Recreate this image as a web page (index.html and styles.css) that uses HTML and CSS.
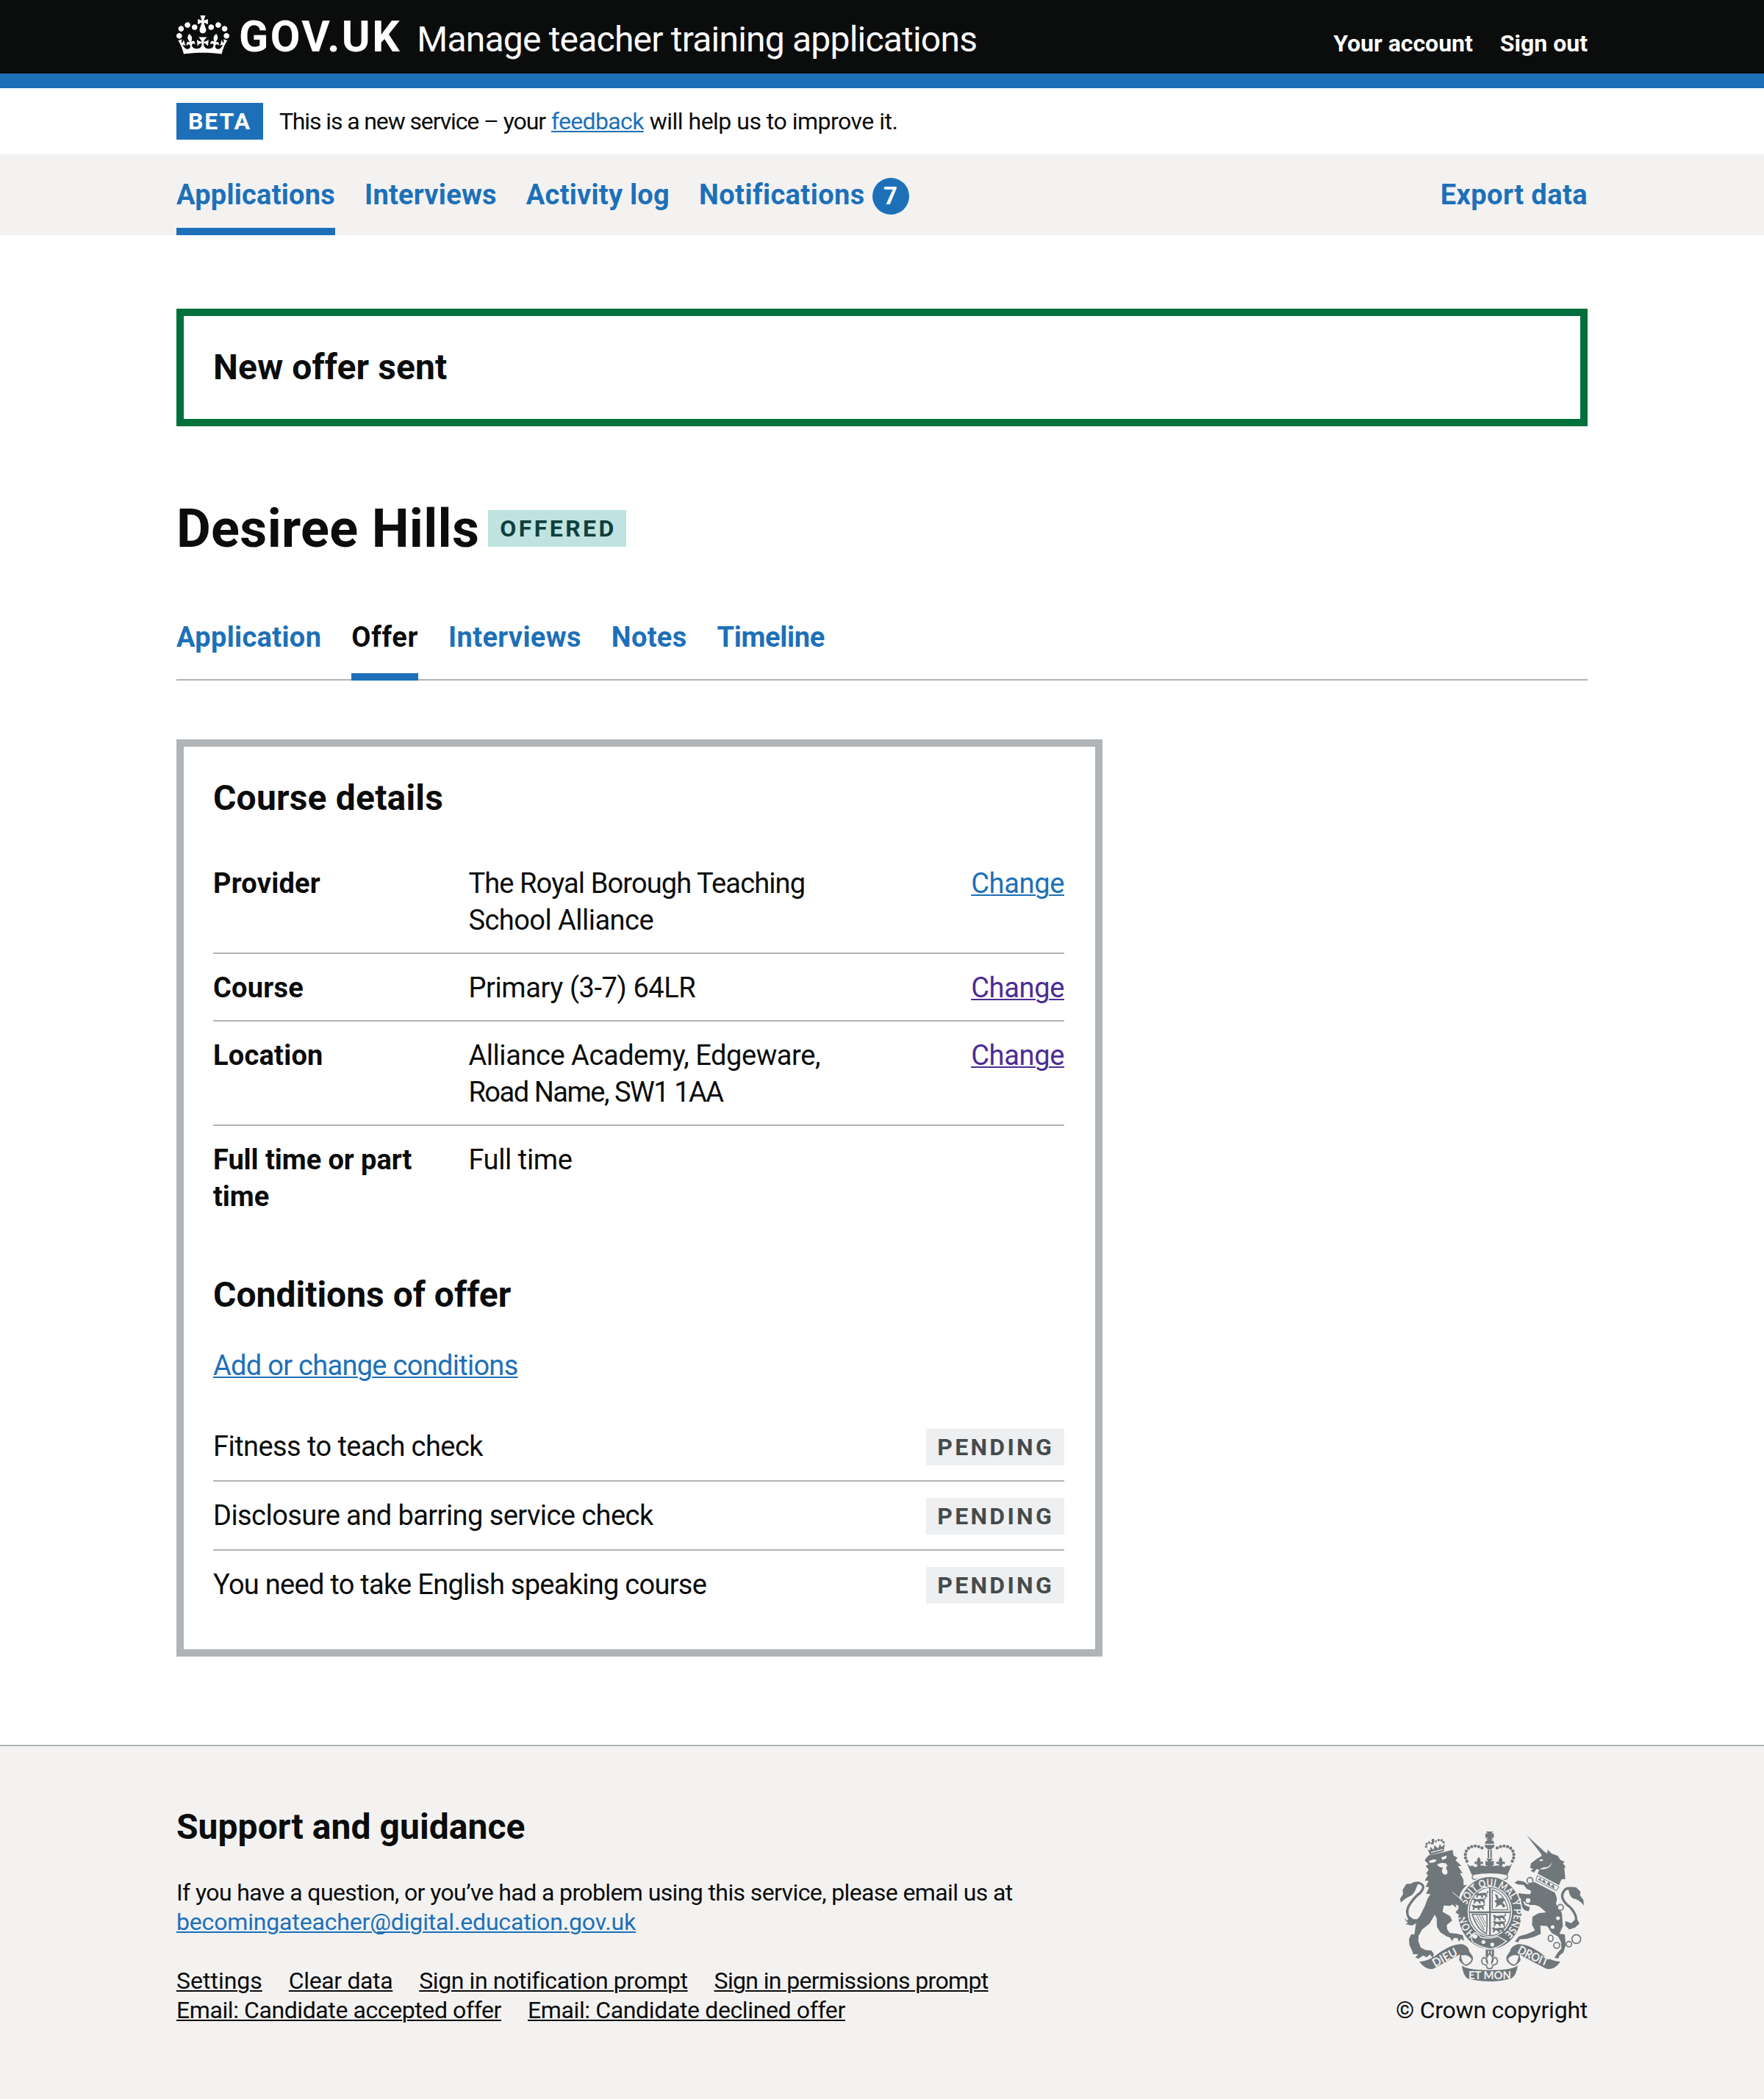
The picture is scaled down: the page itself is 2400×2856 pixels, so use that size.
FILE: index.html
```html
<!DOCTYPE html>
<html lang="en">
<head>
<meta charset="utf-8">
<title>Desiree Hills – Manage teacher training applications – GOV.UK</title>
<link rel="stylesheet" href="styles.css">
</head>
<body>
<header class="header">
  <div class="container header__inner">
    <a class="header__logo" href="#">
      <svg class="header__crown" viewBox="0 0 132 97" width="72" height="53" aria-hidden="true"><path fill="currentColor" fill-rule="evenodd" d="M25 30.2c3.5 1.5 7.7-.2 9.1-3.7 1.5-3.6-.2-7.8-3.9-9.2-3.6-1.4-7.6.3-9.1 3.9-1.4 3.5.3 7.5 3.9 9zM9 39.5c3.6 1.5 7.8-.2 9.2-3.7 1.5-3.6-.2-7.8-3.9-9.1-3.6-1.5-7.6.2-9.1 3.8-1.4 3.5.3 7.5 3.8 9zM4.4 57.2c3.5 1.5 7.7-.2 9.1-3.8 1.5-3.6-.2-7.7-3.9-9.1-3.5-1.5-7.6.3-9.1 3.8-1.4 3.5.3 7.6 3.9 9.1zm38.3-21.4c3.5 1.5 7.7-.2 9.1-3.8 1.5-3.6-.2-7.7-3.9-9.1-3.6-1.5-7.6.3-9.1 3.8-1.3 3.6.4 7.7 3.9 9.1zm64.4-5.6c-3.6 1.5-7.8-.2-9.1-3.7-1.5-3.6.2-7.8 3.8-9.2 3.6-1.4 7.7.3 9.2 3.9 1.3 3.5-.4 7.5-3.9 9zm15.9 9.3c-3.6 1.5-7.7-.2-9.1-3.7-1.5-3.6.2-7.8 3.7-9.1 3.6-1.5 7.7.2 9.2 3.8 1.5 3.5-.3 7.5-3.8 9zm4.7 17.7c-3.6 1.5-7.8-.2-9.2-3.8-1.5-3.6.2-7.7 3.9-9.1 3.6-1.5 7.7.3 9.2 3.8 1.3 3.5-.4 7.6-3.9 9.1zM89.3 35.8c-3.6 1.5-7.8-.2-9.2-3.8-1.4-3.6.2-7.7 3.9-9.1 3.6-1.5 7.7.3 9.2 3.8 1.4 3.6-.3 7.7-3.9 9.1zM69.7 17.7l8.9 4.7V9.3l-8.9 2.8c-.2-.3-.5-.6-.9-.9L72.4 0H59.6l3.5 11.2c-.3.3-.6.5-.9.9l-8.8-2.8v13.1l8.8-4.7c.3.3.6.7.9.9l-5 15.4v.1c-.2.8-.4 1.6-.4 2.4 0 4.1 3.1 7.5 7 8.1h.2c.3 0 .7.1 1 .1.4 0 .7 0 1-.1h.2c4-.6 7.1-4.1 7.1-8.1 0-.8-.1-1.7-.4-2.4V34l-5.1-15.4c.4-.2.7-.6 1-.9zM66 92.8c16.9 0 32.8 1.1 47.1 3.2 4-16.9 8.9-26.7 14-33.5l-9.6-3.4c1 4.9 1.1 7.2 0 10.2-1.5-1.4-3-4.3-4.2-8.7L108.6 76c2.8-2 5-3.2 7.5-3.3-4.4 9.4-10 11.9-13.6 11.2-4.3-.8-6.3-4.6-5.6-7.9 1-4.7 5.7-5.9 8-.5 4.3-8.7-3-11.4-7.6-8.8 7.1-7.2 7.9-13.5 2.1-21.1-8 6.1-8.1 12.3-4.5 20.8-4.7-5.4-12.1-2.5-9.5 6.2 3.4-5.2 7.9-2 7.2 3.1-.6 4.3-6.4 7.8-13.5 7.2-10.3-.9-10.9-8-11.2-13.8 2.5-.5 7.1 1.8 11 7.3L80.2 60c-4.1 4.4-8 5.3-12.3 5.4 1.4-4.4 8-11.6 8-11.6H55.5s6.4 7.2 7.9 11.6c-4.2-.1-8-1-12.3-5.4l1.4 16.4c3.9-5.5 8.5-7.7 10.9-7.3-.3 5.8-.9 12.8-11.1 13.8-7.2.6-12.9-2.9-13.5-7.2-.7-5 3.8-8.3 7.1-3.1 2.7-8.7-4.6-11.6-9.4-6.2 3.7-8.5 3.6-14.7-4.6-20.8-5.8 7.6-5 13.9 2.2 21.1-4.7-2.6-11.9.1-7.7 8.8 2.3-5.5 7.1-4.2 8.1.5.7 3.3-1.3 7.1-5.7 7.9-3.5.7-9-1.8-13.5-11.2 2.5.1 4.7 1.3 7.5 3.3l-4.7-15.4c-1.2 4.4-2.7 7.2-4.3 8.7-1.1-3-.9-5.3 0-10.2l-9.5 3.4c5 6.9 9.9 16.7 14 33.5 14.8-2.1 30.8-3.2 47.7-3.2z"/></svg>
      <span class="header__logotype">GOV.UK</span>
    </a>
    <a class="header__service" href="#">Manage teacher training applications</a>
    <nav class="header__links">
      <a href="#">Your account</a>
      <a href="#">Sign out</a>
    </nav>
  </div>
</header>
<div class="brand-bar"></div>

<div class="container phase">
  <strong class="tag tag--phase">BETA</strong>
  <span class="phase__text"><span class="track-n35">This is a new service – your</span> <a class="link track-n20" href="#">feedback</a> <span class="track-n17">will help us to improve it.</span></span>
</div>

<div class="primary-nav">
  <div class="container primary-nav__inner">
    <nav class="primary-nav__list">
      <a class="primary-nav__item primary-nav__item--current" href="#">Applications</a>
      <a class="primary-nav__item" href="#">Interviews</a>
      <a class="primary-nav__item" href="#">Activity log</a>
      <a class="primary-nav__item track-p12" href="#">Notifications<span class="badge">7</span></a>
    </nav>
    <a class="primary-nav__item track-p12" href="#">Export data</a>
  </div>
</div>

<main class="container main">
  <section class="panel">
    <h2 class="heading-m track-p2">New offer sent</h2>
  </section>

  <div class="title">
    <h1 class="title__name">Desiree Hills</h1>
    <strong class="tag tag--turquoise">OFFERED</strong>
  </div>

  <nav class="tabs">
    <a class="tabs__item" href="#">Application</a>
    <a class="tabs__item tabs__item--current track-p15" href="#">Offer</a>
    <a class="tabs__item" href="#">Interviews</a>
    <a class="tabs__item" href="#">Notes</a>
    <a class="tabs__item track-n9" href="#">Timeline</a>
  </nav>

  <section class="card">
    <h2 class="heading-m track-p4">Course details</h2>
    <dl class="summary">
      <div class="summary__row">
        <dt>Provider</dt>
        <dd class="summary__value"><span class="track-n23">The Royal Borough Teaching</span><br>School Alliance</dd>
        <dd class="summary__action"><a class="link" href="#">Change</a></dd>
      </div>
      <div class="summary__row">
        <dt>Course</dt>
        <dd class="summary__value track-n11">Primary (3-7) 64LR</dd>
        <dd class="summary__action"><a class="link link--visited" href="#">Change</a></dd>
      </div>
      <div class="summary__row">
        <dt>Location</dt>
        <dd class="summary__value"><span class="track-n11">Alliance Academy, Edgeware,</span><br><span class="track-n39">Road Name, SW1 1AA</span></dd>
        <dd class="summary__action"><a class="link link--visited" href="#">Change</a></dd>
      </div>
      <div class="summary__row">
        <dt class="track-n2">Full time or part time</dt>
        <dd class="summary__value track-n11">Full time</dd>
      </div>
    </dl>

    <h2 class="heading-m conditions-heading">Conditions of offer</h2>
    <p class="conditions-link"><a class="link" href="#">Add or change conditions</a></p>
    <ul class="conditions">
      <li class="conditions__row"><span>Fitness to teach check</span><strong class="tag tag--grey">PENDING</strong></li>
      <li class="conditions__row"><span>Disclosure and barring service check</span><strong class="tag tag--grey">PENDING</strong></li>
      <li class="conditions__row"><span class="track-n19">You need to take English speaking course</span><strong class="tag tag--grey">PENDING</strong></li>
    </ul>
  </section>
</main>

<footer class="footer">
  <div class="container footer__inner">
    <div class="footer__meta">
      <h2 class="heading-m track-p1">Support and guidance</h2>
      <p class="footer__text"><span class="track-n19">If you have a question, or you’ve had a problem using this service, please email us at</span><br><a class="link track-n5" href="#">becomingateacher@digital.education.gov.uk</a></p>
      <ul class="footer__links">
        <li><a href="#">Settings</a></li>
        <li><a class="track-n11" href="#">Clear data</a></li>
        <li><a class="track-n12" href="#">Sign in notification prompt</a></li>
        <li><a class="track-n20" href="#">Sign in permissions prompt</a></li>
      </ul>
      <ul class="footer__links">
        <li><a class="track-n12" href="#">Email: Candidate accepted offer</a></li>
        <li><a class="track-n11" href="#">Email: Candidate declined offer</a></li>
      </ul>
    </div>
    <div class="footer__crown">
      <svg class="crest" viewBox="72 66 750 612" width="250" height="204" role="img" aria-label="Royal coat of arms">
        <defs>
          <path id="garter-left" d="M380 482A98 107 0 0 1 341 378"/>
          <path id="garter-top" d="M345 366A98 107 0 0 1 535 376"/>
          <path id="garter-right" d="M536 382A98 107 0 0 1 480 494"/>
          <path id="dieu" d="M215 621Q262 594 330 558"/>
          <path id="droit" d="M548 560Q600 590 684 622"/>
          <g id="fleur"><path d="M0-18C10-8 8 0 4 8C8-2 20-2 17 9C15 14 11 12 11 8C8 12 6 16 5 20H-5C-6 16-8 12-11 8C-11 12-15 14-17 9C-20-2-8-2-4 8C-8 0-10-8 0-18Z"/></g>
          <g id="beast"><path d="M0 4L7 0L14 5L40 2L48 8L50 20L44 20L40 13L30 14L34 22L26 22L22 14L12 14L10 22L3 22L6 12Z"/><path d="M44 4Q56 6 50-6" fill="none" stroke="#6f777b" stroke-width="4"/></g>
        </defs>
        <g fill="#6f777b">
          <!-- lion -->
          <path d="M172 184L186 164L250 150L286 141L290 164L306 173L298 184L322 206L308 208L327 236L316 236L330 262L331 286L345 284Q312 312 312 346L326 362L344 398L342 422L334 410L328 424L322 408L312 414L312 400L298 396L306 384L310 372L298 362L302 378L284 364L276 370L250 368L245 394L276 412L284 430L262 448L264 466L274 480L306 484L328 490L333 513L320 504L312 516L306 502L292 500L284 513L274 498L262 494L236 478L222 455L221 420L213 406L192 442L162 466L147 492L146 514L156 540L176 550L200 552L210 568L204 582L194 568L180 580L166 572L146 586L134 580L146 568L124 566L122 556L110 530L108 506L116 486L130 486L136 444L172 372L184 340L196 322L178 320L190 294L176 292L188 268L172 266L186 244L178 238L188 222L176 206L188 200Z"/>
          <path d="M184 138L194 162L250 146L254 116L242 130L234 118L227 136L212 122L208 142L196 128L194 144Z"/>
          <path d="M198 152L246 139" fill="none" stroke="#f3f2f1" stroke-width="4"/>
          <g><circle cx="178" cy="128" r="5"/><circle cx="180" cy="117" r="5"/><circle cx="190" cy="111" r="5"/><circle cx="200" cy="115" r="4"/><circle cx="218" cy="106" r="4"/><circle cx="229" cy="101" r="5"/><circle cx="241" cy="102" r="5"/><circle cx="249" cy="110" r="5"/><path d="M202 96h8l2 8-6 18-6-18z"/></g>
          <!-- lion tail -->
          <path d="M120 436Q86 398 112 362Q134 330 152 318Q182 286 148 276Q130 274 118 284" fill="none" stroke="#6f777b" stroke-width="10"/>
          <path d="M148 272L122 280L98 280L82 304L84 322L72 340L74 356Q92 338 116 328Q130 320 140 290Z"/>
          <path d="M88 420L102 430L110 412L126 424L142 424L152 412Q150 438 120 450L92 444L104 440Z"/>
          <!-- unicorn -->
          <path d="M588 81L660 148L672 156L674 140L690 156L716 166L726 182L744 190L736 196L747 210L742 216L746 260L730 262L718 292L636 262L632 240L640 222L628 220L618 234L604 226L616 220L602 214L606 196L632 176L650 166L646 156Z"/>
          <path d="M632 238L722 286L712 312L622 268Z" fill="#f3f2f1"/>
          <path d="M632 246L720 292L710 308L626 266Z" fill="none" stroke="#6f777b" stroke-width="3"/>
          <path d="M634 262L644 256L650 270L660 262L668 282L680 270L686 290L698 282L702 300Z"/>
          <path d="M620 272L704 316L712 340L708 362L722 380L732 400L736 452L722 484L744 486L748 530L738 560L722 572L718 584L702 582L714 562L730 544L728 516L716 494L690 480L672 452L644 450L646 484L620 496L590 504L560 506L554 518L540 516L556 494L592 484L622 470L610 446L612 414L636 400L668 396L640 372L622 366L600 366L588 350L574 352L580 366L602 376L596 392L578 386L562 364L566 340L546 338L556 318L586 322L604 322L606 308L588 300L576 284L552 282L538 276L552 266L576 270L592 282Z"/>
          <path d="M758 452Q798 444 788 410Q776 380 752 364Q722 334 740 310Q748 296 766 298" fill="none" stroke="#6f777b" stroke-width="10"/>
          <path d="M752 300L768 292L790 294L808 312L806 326L820 346L822 368Q800 342 778 340Q762 330 760 306Z"/>
          <path d="M746 432L770 440L792 420L804 442L786 458L762 466L746 450Z"/>
          <!-- chain -->
          <g fill="#f3f2f1" stroke="#6f777b" stroke-width="5"><circle cx="602" cy="266" r="12"/><circle cx="594" cy="348" r="12"/><circle cx="726" cy="376" r="12"/><circle cx="716" cy="420" r="10"/><circle cx="694" cy="456" r="10"/><ellipse cx="686" cy="502" rx="10" ry="13"/><circle cx="711" cy="531" r="12"/><circle cx="761" cy="526" r="11"/><circle cx="791" cy="505" r="18"/></g>
          <!-- crown -->
          <path d="M423 66h28l-7 11 10-5v22l-10-5 7 11h-28l7-11-10 5V72l10 5z"/>
          <path d="M437 99Q456 102 456 116H418Q418 102 437 99ZM416 121H458Q456 136 437 140Q418 136 416 121Z"/>
          <path d="M429 140h6v34h-6zM440 140h6v34h-6z"/>
          <g fill="none" stroke="#6f777b" stroke-width="13" stroke-linecap="round" stroke-dasharray="0 14.5"><path d="M406 133Q372 116 346 138Q328 166 350 196"/><path d="M468 133Q502 116 528 138Q546 166 524 196"/></g>
          <path d="M344 196Q356 210 362 206Q372 204 376 212L392 206Q410 202 420 208L437 202L454 208Q464 202 482 206L498 212Q502 204 512 206Q518 210 530 196L510 242Q437 228 364 242Z"/>
          <use href="#fleur" x="393" y="188"/><use href="#fleur" x="482" y="188"/>
          <path d="M424 176h26l-8 14 12-5v20h-34v-20l12 5z"/>
          <path d="M376 240Q437 230 498 240Q514 242 510 254Q508 262 498 262Q437 246 376 262Q364 260 366 250Q368 242 376 240Z" fill="#f3f2f1" stroke="#6f777b" stroke-width="4"/>
          <!-- garter -->
          <ellipse cx="438" cy="399" rx="134" ry="152" fill="#f3f2f1"/>
          <ellipse cx="438" cy="399" rx="129" ry="147"/>
          <ellipse cx="438" cy="393" rx="91" ry="104" fill="#f3f2f1"/>
          <ellipse cx="438" cy="393" rx="84" ry="98" fill="none" stroke="#6f777b" stroke-width="4"/>
          <path d="M435 295h7v196h-7zM354 392h167v7H354z"/>
          <path d="M366 404H426Q428 450 424 482Q388 470 366 404Z" fill="none" stroke="#6f777b" stroke-width="5"/>
          <path d="M384 408l32 60M394 408l26 48M404 408l18 34M376 416l38 56" fill="none" stroke="#6f777b" stroke-width="3"/>
          <use href="#beast" x="378" y="314"/><use href="#beast" x="368" y="338"/><use href="#beast" x="364" y="364"/>
          <path d="M448 304Q500 320 512 386H448Z" fill="none" stroke="#6f777b" stroke-width="4"/>
          <path d="M458 320L470 326L474 340L490 336L498 346L490 356L502 370L494 378L484 364L470 370L460 378L466 360L456 350L466 344Z"/>
          <use href="#beast" x="450" y="406"/><use href="#beast" x="450" y="430"/><use href="#beast" x="446" y="456"/>
          <g class="crest__garter">
            <text><textPath href="#garter-left" textLength="96" lengthAdjust="spacingAndGlyphs">HONI</textPath></text>
            <text><textPath href="#garter-top" textLength="266" lengthAdjust="spacingAndGlyphs">SOIT QUI MAL Y</textPath></text>
            <text><textPath href="#garter-right" textLength="112" lengthAdjust="spacingAndGlyphs">PENSE</textPath></text>
          </g>
          <path d="M366 494Q376 470 390 486L402 498Q438 506 470 494L506 514Q470 544 437 545Q404 540 378 524Q358 514 366 494Z" stroke="#f3f2f1" stroke-width="4"/>
          <circle cx="378" cy="494" r="9" fill="#f3f2f1"/><circle cx="412" cy="517" r="8" fill="#f3f2f1"/><circle cx="448" cy="528" r="8" fill="#f3f2f1"/>
          <!-- lion paw over the garter -->
          <path d="M286 314L326 352L346 396L342 424L332 412L322 426L316 408L300 398L312 376Z"/>
          <path d="M286 315Q316 336 332 356" fill="none" stroke="#f3f2f1" stroke-width="3"/>
          <!-- faces -->
          <path d="M190 186l18-6 14 2-10 10-20 2zM240 172l22-8-2 12-16 6z" fill="#f3f2f1"/>
          <path d="M222 202Q234 190 258 196L266 206Q258 208 260 218Q270 230 262 240Q250 246 244 234Q240 222 248 212Q234 216 222 202Z" fill="#f3f2f1"/>
          <path d="M638 184q10-8 18-2-6 8-18 2zM640 220q44 4 52-28-14 24-34 20z" fill="#f3f2f1"/>
          <!-- stem and motto -->
          <path d="M421 548h34v30h-34z"/><path d="M431 553h4v26h-4zM442 553h4v26h-4z" fill="#f3f2f1"/>
          <path d="M437 564Q458 586 446 604Q444 584 462 580Q474 590 466 606L450 612Q450 626 437 626Q424 626 424 612L408 606Q400 590 412 580Q430 584 428 604Q416 586 437 564Z" fill="#f3f2f1" stroke="#6f777b" stroke-width="5"/>
          <path d="M150 598Q190 596 236 558Q290 522 326 526Q352 534 354 556L368 576Q374 602 344 614Q324 610 312 590L318 566Q262 596 208 626Q178 634 150 598Z"/>
          <path d="M726 598Q684 596 640 558Q588 522 552 526Q524 534 520 556L506 576Q500 602 532 614Q552 610 564 590L556 566Q610 596 668 626Q700 634 726 598Z"/>
          <path d="M318 570Q352 562 366 586Q362 606 340 612Q320 606 318 570ZM558 570Q522 562 510 586Q514 606 536 612Q556 606 558 570Z" fill="#f3f2f1" stroke="#6f777b" stroke-width="5"/>
          <path d="M324 612Q342 632 437 632Q532 632 552 612Q546 654 526 666Q484 678 437 678Q390 678 346 666Q328 652 324 612Z"/>
          <g class="crest__motto">
            <text><textPath href="#dieu" textLength="108" lengthAdjust="spacingAndGlyphs">DIEU</textPath></text>
            <text><textPath href="#droit" textLength="134" lengthAdjust="spacingAndGlyphs">DROIT</textPath></text>
            <text x="351" y="670" textLength="174" lengthAdjust="spacingAndGlyphs">ET MON</text>
          </g>
        </g>
      </svg>
      <span class="footer__copyright">© Crown copyright</span>
    </div>
  </div>
</footer>
</body>
</html>
```
FILE: styles.css
```css
* {
  box-sizing: border-box;
}

body {
  margin: 0;
  min-height: 2856px;
  display: flex;
  flex-direction: column;
  background: #fff;
  color: #0b0c0c;
  font-family: Roboto, "Liberation Sans", sans-serif;
  font-size: 32px;
  line-height: 40px;
}

h1, h2, p, ul, dl, dd {
  margin: 0;
  padding: 0;
}

ul {
  list-style: none;
}

a {
  color: inherit;
  text-decoration: none;
}

.container {
  width: 1920px;
  margin-left: auto;
  margin-right: auto;
}

.link {
  color: #1d70b8;
  text-decoration: underline;
  text-decoration-thickness: 2px;
  text-underline-offset: 2px;
}

.link--visited {
  color: #4c2c92;
}

.heading-m {
  font-size: 48px;
  line-height: 60px;
  font-weight: 700;
}

/* Tracking adjustments */
.track-n39 { letter-spacing: -0.0387em; }
.track-n35 { letter-spacing: -0.0349em; }
.track-n23 { letter-spacing: -0.023em; }
.track-n20 { letter-spacing: -0.0202em; }
.track-n19 { letter-spacing: -0.019em; }
.track-n17 { letter-spacing: -0.0157em; }
.track-n12 { letter-spacing: -0.0128em; }
.track-n11 { letter-spacing: -0.0115em; }
.track-n9 { letter-spacing: -0.0088em; }
.track-n5 { letter-spacing: -0.0051em; }
.track-n2 { letter-spacing: -0.0016em; }
.track-p1 { letter-spacing: 0.001em; }
.track-p2 { letter-spacing: 0.002em; }
.track-p4 { letter-spacing: 0.004em; }

/* Header */
.header {
  height: 100px;
  background: #0b0c0c;
  color: #fff;
}

.header__inner {
  display: flex;
  align-items: baseline;
  padding-top: 20px;
}

.header__logo {
  display: flex;
  align-items: baseline;
}

.header__crown {
  align-self: flex-start;
  margin-top: 1px;
}

.header__logotype {
  margin-left: 13px;
  font-size: 59px;
  line-height: 60px;
  font-weight: 700;
  letter-spacing: 0.043em;
}

.header__service {
  margin-left: 21px;
  font-size: 48px;
  letter-spacing: -0.0165em;
}

.header__links {
  display: flex;
  gap: 37px;
  margin-left: auto;
  font-weight: 700;
}

.brand-bar {
  height: 20px;
  background: #1d70b8;
}

/* Tags */
.tag {
  display: block;
  height: 50px;
  padding: 9px 13px 9px 16px;
  font-size: 32px;
  line-height: 32px;
  font-weight: 700;
}

.tag--phase {
  padding-right: 16px;
  background: #1d70b8;
  color: #fff;
  letter-spacing: 0.0584em;
}

.tag--turquoise {
  margin: 14px 0 0 12px;
  background: #bfe3e0;
  color: #10403c;
  letter-spacing: 0.107em;
}

.tag--grey {
  padding-left: 15px;
  padding-right: 14px;
  background: #eeeff1;
  color: #454b4d;
  letter-spacing: 0.1025em;
}

/* Phase banner */
.phase {
  display: flex;
  align-items: baseline;
  gap: 22px;
  height: 90px;
  padding-top: 20px;
}

.phase__text {
  white-space: nowrap;
}

/* Primary navigation */
.primary-nav {
  height: 110px;
  background: #f3f2f1;
}

.primary-nav__inner {
  display: flex;
  justify-content: space-between;
}

.primary-nav__list {
  display: flex;
  gap: 40px;
}

.primary-nav__item {
  display: flex;
  height: 110px;
  padding-top: 30px;
  color: #1d70b8;
  font-size: 38px;
  line-height: 50px;
  font-weight: 700;
  letter-spacing: 0.0065em;
}

.primary-nav__item.track-p12 {
  letter-spacing: 0.0112em;
}

.primary-nav__item--current {
  border-bottom: 10px solid #1d70b8;
}

.badge {
  width: 50px;
  height: 50px;
  margin: 2px 0 0 10px;
  border-radius: 50%;
  background: #1d70b8;
  color: #fff;
  font-size: 33px;
  line-height: 50px;
  text-align: center;
}

/* Main */
.main {
  padding-top: 100px;
}

.panel {
  height: 160px;
  padding: 40px;
  border: 10px solid #00703c;
}

.title {
  display: flex;
  margin-top: 100px;
}

.title__name {
  font-size: 72px;
  line-height: 80px;
  font-weight: 700;
  letter-spacing: 0.0045em;
}

.tabs {
  display: flex;
  gap: 41px;
  height: 84px;
  margin-top: 82px;
  border-bottom: 2px solid #b1b4b6;
}

.tabs__item {
  height: 84px;
  color: #1d70b8;
  font-size: 38px;
  line-height: 50px;
  font-weight: 700;
  letter-spacing: 0.0088em;
}

.tabs__item.track-n9 {
  letter-spacing: -0.0088em;
}

.tabs__item.track-p15 {
  letter-spacing: 0.018em;
}

.tabs__item--current {
  border-bottom: 10px solid #1d70b8;
  color: #0b0c0c;
}

/* Offer card */
.card {
  width: 1260px;
  margin-top: 80px;
  padding: 40px 42px 40px 40px;
  border: 10px solid #b1b4b6;
  font-size: 38px;
  line-height: 50px;
}

.summary {
  margin-top: 40px;
}

.summary__row {
  display: flex;
  padding: 21px 0 19px;
  border-bottom: 2px solid #b1b4b6;
}

.summary__row:last-child {
  border-bottom: 0;
}

.summary__row dt {
  width: 30%;
  padding-right: 40px;
  font-weight: 700;
  letter-spacing: 0.006em;
}

.summary__row dt.track-n2 {
  letter-spacing: -0.0016em;
}

.summary__value {
  width: 50%;
  letter-spacing: -0.014em;
}

.summary__value.track-n11 {
  letter-spacing: -0.0105em;
}

.summary__action {
  width: 20%;
  text-align: right;
  letter-spacing: -0.0087em;
}

.conditions-heading {
  margin-top: 60px;
}

.conditions-link {
  margin-top: 41px;
  letter-spacing: -0.0187em;
}

.conditions {
  margin-top: 39px;
}

.conditions__row {
  display: flex;
  justify-content: space-between;
  height: 94px;
  padding: 21px 0;
  border-bottom: 2px solid #b1b4b6;
  letter-spacing: -0.0147em;
}

.conditions__row:last-child {
  border-bottom-color: transparent;
}

.conditions__row .tag {
  margin-top: 1px;
}

/* Footer */
.footer {
  flex-grow: 1;
  margin-top: 120px;
  padding-top: 80px;
  border-top: 2px solid #b1b4b6;
  background: #f3f2f1;
}

.footer__inner {
  display: flex;
  justify-content: space-between;
  align-items: flex-end;
}

.footer__text {
  margin-top: 39px;
}

.footer__links {
  display: flex;
  gap: 36px;
}

.footer__text + .footer__links {
  margin-top: 40px;
}

.footer__links a {
  text-decoration: underline;
  text-decoration-thickness: 2px;
  text-underline-offset: 2px;
}

.footer__crown {
  display: flex;
  flex-direction: column;
  align-items: center;
}

.footer__copyright {
  margin-top: 19px;
  letter-spacing: -0.0075em;
}

.crest__garter,
.crest__motto {
  fill: #f3f2f1;
  font-family: Lato, sans-serif;
  font-weight: 700;
}

.crest__garter {
  font-size: 43px;
}

.crest__motto {
  font-size: 48px;
}
```
